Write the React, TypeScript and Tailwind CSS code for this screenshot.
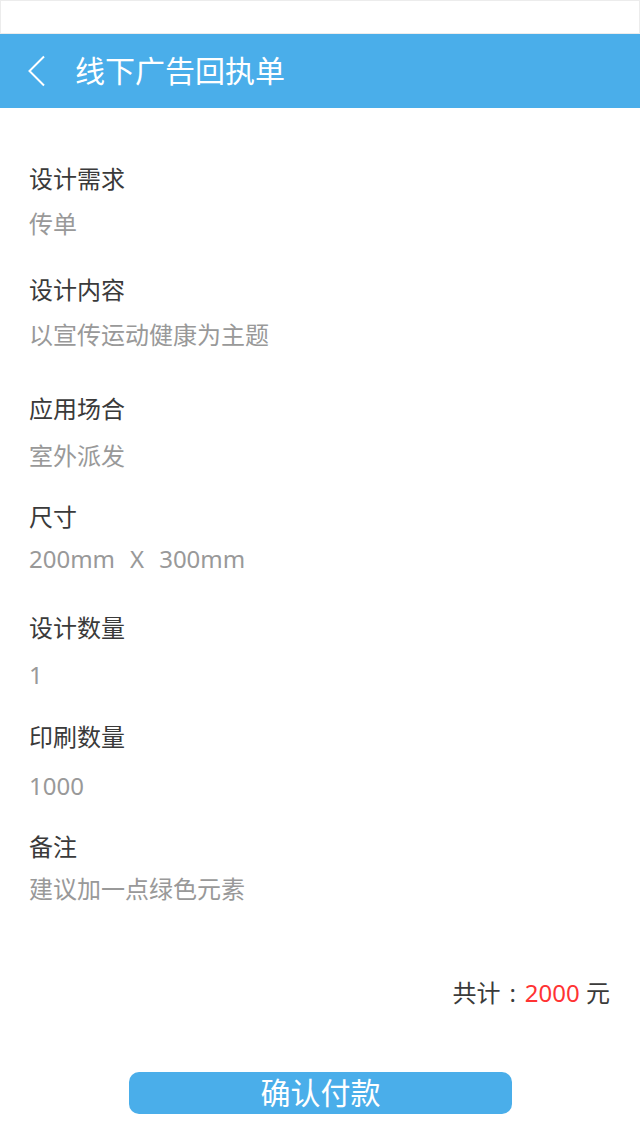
import type { ReactNode } from "react";

const FONT = { fontFamily: '"Noto Sans", "Noto Sans CJK SC", sans-serif' };

type Row = { label: string; value: ReactNode; mt: string; gap: string };

const ROWS: Row[] = [
  { label: "设计需求", value: "传单", mt: "mt-[56px]", gap: "mt-[15px]" },
  { label: "设计内容", value: "以宣传运动健康为主题", mt: "mt-[36px]", gap: "mt-[15px]" },
  { label: "应用场合", value: "室外派发", mt: "mt-[44px]", gap: "mt-[17px]" },
  {
    label: "尺寸",
    value: (
      <>
        200mm<span className="mx-[15px]">X</span>300mm
      </>
    ),
    mt: "mt-[31px]",
    gap: "mt-[12px]",
  },
  { label: "设计数量", value: "1", mt: "mt-[39px]", gap: "mt-[17px]" },
  { label: "印刷数量", value: "1000", mt: "mt-[32px]", gap: "mt-[19px]" },
  { label: "备注", value: "建议加一点绿色元素", mt: "mt-[31px]", gap: "mt-[12px]" },
];

export default function App() {
  return (
    <div className="w-[640px] h-[1136px] bg-white overflow-hidden" style={FONT}>
      <div className="h-[34px] border border-[#ececec] bg-white" />
      <header className="h-[74px] bg-[#4aaeea] flex items-center text-white">
        <svg className="ml-[27px] w-[20px] h-[32px]" viewBox="0 0 20 32" fill="none" stroke="white" strokeWidth="2">
          <path d="M17 1.5 L2.5 16 L17 30.5" />
        </svg>
        <h1 className="ml-[28px] text-[30px] leading-[40px]">线下广告回执单</h1>
      </header>

      <main className="px-[29px]">
        {ROWS.map((r) => (
          <div key={r.label} className={r.mt}>
            <div className="text-[24px] leading-[30px] text-[#3a3a3a]">{r.label}</div>
            <div className={`${r.gap} text-[24px] leading-[30px] text-[#999999] whitespace-pre`}>{r.value}</div>
          </div>
        ))}

        <div className="mt-[74px] flex justify-end pr-[1px] text-[24px] leading-[30px] text-[#3a3a3a]">
          共计<span className="mx-[9px]">:</span>
          <span className="text-[#ff3333]">2000</span>&nbsp;元
        </div>
      </main>

      <div className="mt-[64px] flex justify-center">
        <button className="w-[383px] h-[42px] ml-[1px] rounded-[10px] bg-[#4aaeea] text-white text-[30px] leading-[42px]">
          确认付款
        </button>
      </div>
    </div>
  );
}
